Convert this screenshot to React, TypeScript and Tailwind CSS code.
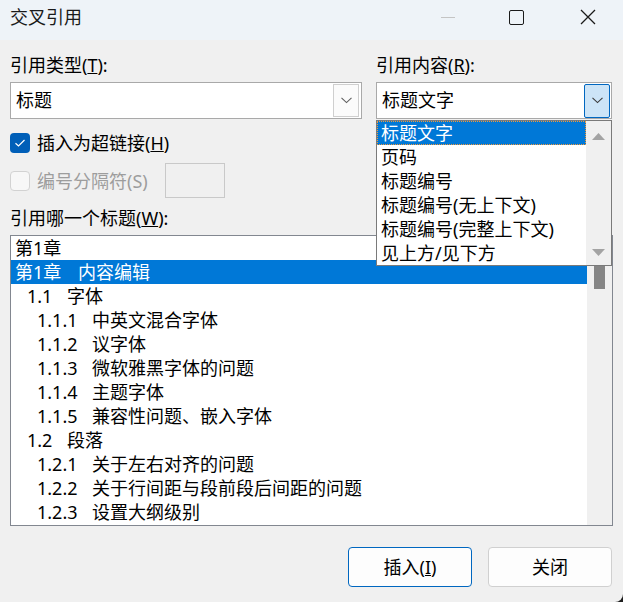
import React from "react";

const FONT = { fontFamily: '"Noto Sans", "Noto Sans CJK SC", sans-serif' };

function Chevron({ color = "#5f5f5f" }: { color?: string }) {
  return (
    <svg width="11" height="7" viewBox="0 0 11 7" fill="none">
      <path d="M0.5 0.8 L5.5 5.6 L10.5 0.8" stroke={color} strokeWidth="1.1" />
    </svg>
  );
}

function Tri({ up }: { up?: boolean }) {
  return (
    <svg width="13" height="7" viewBox="0 0 13 7">
      {up ? <path d="M0 7 L6.5 0 L13 7 Z" fill="#a3a3a3" /> : <path d="M0 0 L6.5 7 L13 0 Z" fill="#a3a3a3" />}
    </svg>
  );
}

type Item = { lvl: number; num: string; text: string; sel?: boolean };

const items: Item[] = [
  { lvl: 0, num: "第1章", text: "" },
  { lvl: 1, num: "第1章", text: "内容编辑", sel: true },
  { lvl: 2, num: "1.1", text: "字体" },
  { lvl: 3, num: "1.1.1", text: "中英文混合字体" },
  { lvl: 3, num: "1.1.2", text: "议字体" },
  { lvl: 3, num: "1.1.3", text: "微软雅黑字体的问题" },
  { lvl: 3, num: "1.1.4", text: "主题字体" },
  { lvl: 3, num: "1.1.5", text: "兼容性问题、嵌入字体" },
  { lvl: 2, num: "1.2", text: "段落" },
  { lvl: 3, num: "1.2.1", text: "关于左右对齐的问题" },
  { lvl: 3, num: "1.2.2", text: "关于行间距与段前段后间距的问题" },
  { lvl: 3, num: "1.2.3", text: "设置大纲级别" },
];

function Row({ it }: { it: Item }) {
  let pl = "pl-[4px]";
  let nw = "w-[63px]";
  if (it.lvl === 2) {
    pl = "pl-[16px]";
    nw = "w-[40px]";
  } else if (it.lvl === 3) {
    pl = "pl-[26px]";
    nw = "w-[55px]";
  }
  return (
    <div
      className={`h-[24px] flex items-center whitespace-nowrap ${pl} ${
        it.sel ? "bg-[#0078d7] text-white" : "text-black"
      }`}
    >
      {it.lvl === 0 ? (
        <span>{it.num}</span>
      ) : (
        <>
          <span className={`${nw} shrink-0`}>{it.num}</span>
          <span>{it.text}</span>
        </>
      )}
    </div>
  );
}

const ddItems = ["标题文字", "页码", "标题编号", "标题编号(无上下文)", "标题编号(完整上下文)", "见上方/见下方"];

export default function App() {
  return (
    <div className="w-[623px] h-[602px] bg-[#1e1e1e] overflow-hidden" style={FONT}>
      <div className="w-[623px] h-[602px] bg-[#f0f0f0] rounded-br-[8px] flex flex-col text-[18px] text-black overflow-hidden">
        {/* Title bar */}
        <div className="h-[40px] bg-[#eef3f8] flex items-center pb-[6px] shrink-0">
          <div className="pl-[10px] leading-[24px] text-[18px] text-[#1a1a1a]">交叉引用</div>
          <div className="ml-auto flex items-center">
            <div className="w-[14px] h-[1px] bg-[#c4c4c4] mr-[54px]" />
            <div className="w-[15px] h-[15px] border-[1.5px] border-[#1a1a1a] rounded-[2px] mr-[56px]" />
            <svg width="16" height="16" viewBox="0 0 16 16" className="mr-[27px]">
              <path d="M1 1 L15 15 M15 1 L1 15" stroke="#1a1a1a" strokeWidth="1.3" />
            </svg>
          </div>
        </div>

        {/* Body */}
        <div className="flex-1 flex flex-col px-[10px] pt-[13px]">
          <div className="flex gap-[14px]">
            {/* Left column */}
            <div className="w-[352px] flex flex-col">
              <div className="h-[24px] leading-[24px]">
                引用类型(<span className="underline">T</span>):
              </div>
              <div className="mt-[5px] h-[37px] bg-white border border-[#a9a9a9] flex items-center pl-[5px] pr-[2px]">
                <span>标题</span>
                <div className="ml-auto w-[26px] h-[33px] border border-[#cfcfcf] bg-[#fbfbfb] flex items-center justify-center">
                  <Chevron />
                </div>
              </div>
              <div className="mt-[12px] h-[24px] flex items-center">
                <div className="w-[20px] h-[20px] rounded-[4px] bg-[#005fb8] flex items-center justify-center">
                  <svg width="12" height="10" viewBox="0 0 12 10" fill="none">
                    <path d="M1.5 5.2 L4.5 8 L10.5 2" stroke="white" strokeWidth="1.2" />
                  </svg>
                </div>
                <span className="ml-[7px] leading-[24px]">
                  插入为超链接(<span className="underline">H</span>)
                </span>
              </div>
              <div className="mt-[8px] h-[35px] flex items-center">
                <div className="w-[20px] h-[20px] rounded-[4px] border border-[#d2d2d2] bg-[#f7f7f7]" />
                <span className="ml-[7px] leading-[24px] text-[#9d9d9d]">编号分隔符(S)</span>
                <div className="ml-[17px] w-[60px] h-[35px] border border-[#c9c9c9] bg-[#f0f0f0]" />
              </div>
            </div>
            {/* Right column */}
            <div className="w-[236px] flex flex-col relative z-10">
              <div className="h-[24px] leading-[24px]">
                引用内容(<span className="underline">R</span>):
              </div>
              <div className="mt-[5px] h-[37px] bg-white border border-[#a9a9a9] flex items-center pl-[5px] pr-[1px]">
                <span>标题文字</span>
                <div className="ml-auto w-[26px] h-[34px] border-[1.5px] border-[#0067c0] bg-[#cce4f7] rounded-[2px] flex items-center justify-center">
                  <Chevron color="#3b3b3b" />
                </div>
              </div>
              {/* Dropdown popup */}
              <div className="absolute left-0 top-[67px] w-[236px] h-[146px] bg-white border border-[#7a7a7a] flex">
                <div className="flex-1 flex flex-col">
                  {ddItems.map((t, i) => (
                    <div
                      key={t}
                      className={`h-[24px] leading-[22px] pl-[3px] whitespace-nowrap ${
                        i === 0
                          ? "bg-[#0078d7] text-white border border-dotted border-[#f29a3a]"
                          : "border border-transparent"
                      }`}
                    >
                      {t}
                    </div>
                  ))}
                </div>
                <div className="w-[25px] bg-[#f0f0f0] flex flex-col items-center justify-between pt-[12px] pb-[9px]">
                  <Tri up />
                  <Tri />
                </div>
              </div>
            </div>
          </div>

          <div className="mt-[8px] h-[24px] leading-[24px]">
            引用哪一个标题(<span className="underline">W</span>):
          </div>
          <div className="mt-[5px] h-[291px] bg-white border border-[#828790] flex">
            <div className="flex-1 flex flex-col overflow-hidden">
              {items.map((it, i) => (
                <Row key={i} it={it} />
              ))}
            </div>
            <div className="w-[25px] bg-[#f0f0f0] flex flex-col items-center pt-[29px]">
              <div className="w-[11px] h-[24px] bg-[#858585]" />
            </div>
          </div>

          <div className="mt-[21px] flex justify-end gap-[16px] pr-[1px]">
            <div className="w-[124px] h-[40px] rounded-[4px] border border-[#0067c0] bg-[#fdfdfd] flex items-center justify-center">
              插入(<span className="underline">I</span>)
            </div>
            <div className="w-[124px] h-[40px] rounded-[4px] border border-[#d0d0d0] bg-[#fdfdfd] flex items-center justify-center">
              关闭
            </div>
          </div>
        </div>
      </div>
    </div>
  );
}
